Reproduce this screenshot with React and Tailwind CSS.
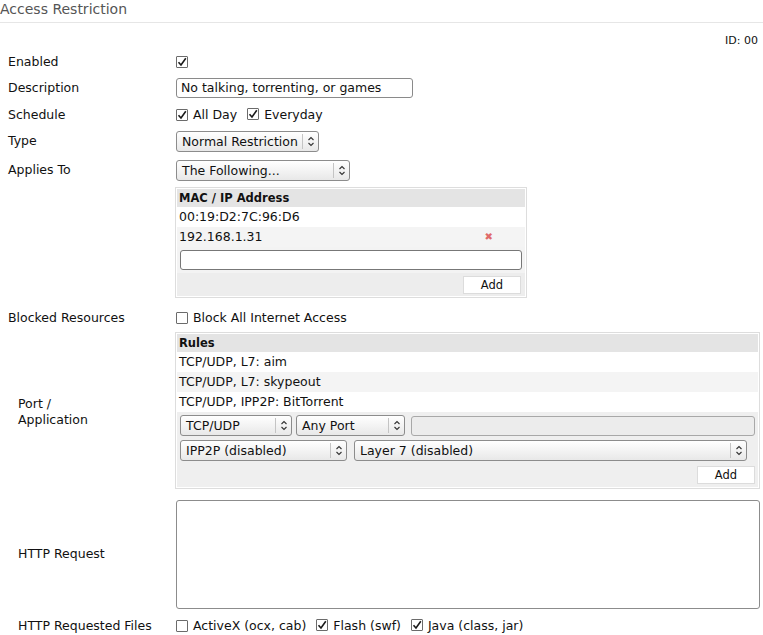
import React from "react";

const Check = ({ checked }) => (
  <span className="inline-flex shrink-0 w-[12px] h-[12px] border border-[#6b6b6b] rounded-[1px] bg-white items-center justify-center">
    {checked && (
      <svg width="10" height="10" viewBox="0 0 10 10">
        <path d="M1.5 5.2 L4 8 L8.8 1.2" fill="none" stroke="#1a1a1a" strokeWidth="1.6" />
      </svg>
    )}
  </span>
);

const Arrows = () => (
  <svg width="8" height="11" viewBox="0 0 8 11">
    <path d="M1.5 4 L4 1.5 L6.5 4 M1.5 7 L4 9.5 L6.5 7" fill="none" stroke="#333" strokeWidth="1.1" />
  </svg>
);

const Select = ({ label, className }) => (
  <div className={"flex h-[21px] border border-[#8c8c8c] rounded-[3px] bg-gradient-to-b from-white to-[#e8e8e8] " + className}>
    <span className="flex-1 pl-[5px] leading-[19px] text-[12.5px] text-[#111] truncate">{label}</span>
    <span className="w-[16px] my-[2px] border-l border-[#c4c4c4] flex items-center justify-center">
      <Arrows />
    </span>
  </div>
);

const AddButton = () => (
  <div className="w-[58px] h-[18px] bg-white border border-[#dcdcdc] text-[11.5px] leading-[16px] text-center text-[#111]">
    Add
  </div>
);

const Row = ({ label, children, className }) => (
  <div className={"flex items-center h-[22px] " + className}>
    <div className="w-[168px] shrink-0">{label}</div>
    <div className="flex items-center">{children}</div>
  </div>
);

export default function App() {
  return (
    <div className="w-[763px] h-[635px] bg-white overflow-hidden font-['DejaVu_Sans',sans-serif] text-[12.5px] text-[#111]">
      <div className="h-[23px] border-b border-[#e6e6e6] text-[14px] leading-[18px] text-[#555]">Access Restriction</div>

      <div className="pl-[8px] pr-[3px]">
        <div className="h-[28px] pt-[11px] text-right pr-[2px] text-[11px] leading-[14px]">ID:&nbsp;00</div>

        <Row label="Enabled">
          <Check checked />
        </Row>

        <Row label="Description" className="mt-[4px]">
          <div className="w-[237px] h-[20px] border border-[#8a8a8a] rounded-[3px] pl-[4px] text-[12.5px] leading-[18px]">
            No talking, torrenting, or games
          </div>
        </Row>

        <Row label="Schedule" className="mt-[5px]">
          <Check checked />
          <span className="ml-[5px]">All Day</span>
          <span className="ml-[10px]"><Check checked /></span>
          <span className="ml-[5px]">Everyday</span>
        </Row>

        <Row label="Type" className="mt-[4px]">
          <Select label="Normal Restriction" className="w-[143px]" />
        </Row>

        <Row label="Applies To" className="mt-[7px]">
          <Select label="The Following..." className="w-[174px]" />
        </Row>

        <div className="ml-[167px] mt-[6px] w-[352px] border border-[#dddddd] p-[1px] text-[12.5px]">
          <div className="h-[18px] bg-[#e4e4e4] pl-[2px] font-bold text-[11.5px] leading-[18px]">MAC / IP Address</div>
          <div className="h-[20px] pl-[2px] leading-[20px]">00:19:D2:7C:96:D6</div>
          <div className="h-[20px] pl-[2px] pr-[32px] bg-[#f4f4f4] flex items-center justify-between">
            <span>192.168.1.31</span>
            <span className="text-[#e06a6a] text-[10px] leading-[10px]">✖</span>
          </div>
          <div className="h-[26px] bg-[#f3f3f3] px-[3px] flex items-center">
            <div className="w-full h-[20px] border border-[#777] rounded-[3px] bg-white" />
          </div>
          <div className="h-[23px] bg-[#ededed] flex items-center justify-end pr-[4px]">
            <AddButton />
          </div>
        </div>

        <Row label="Blocked Resources" className="mt-[9px]">
          <Check />
          <span className="ml-[5px]">Block All Internet Access</span>
        </Row>

        <div className="flex mt-[3px]">
          <div className="w-[167px] shrink-0 pl-[10px] pt-[3px] flex items-center leading-[16px]">
            Port /<br />Application
          </div>
          <div className="w-[586px] border border-[#dddddd] p-[1px] text-[12.5px]">
            <div className="h-[18px] bg-[#e4e4e4] pl-[2px] font-bold text-[11.5px] leading-[18px]">Rules</div>
            <div className="h-[20px] pl-[2px] leading-[20px]">TCP/UDP, L7: aim</div>
            <div className="h-[20px] pl-[2px] leading-[20px] bg-[#f4f4f4]">TCP/UDP, L7: skypeout</div>
            <div className="h-[20px] pl-[2px] leading-[20px]">TCP/UDP, IPP2P: BitTorrent</div>
            <div className="bg-[#efefef] px-[3px] pt-[3px] pb-[1px] flex flex-col gap-[4px]">
              <div className="flex items-center">
                <Select label="TCP/UDP" className="w-[112px]" />
                <Select label="Any Port" className="w-[109px] ml-[4px]" />
                <div className="flex-1 ml-[6px] h-[20px] border border-[#a8a8a8] rounded-[3px] bg-[#ececec]" />
              </div>
              <div className="flex items-center">
                <Select label="IPP2P (disabled)" className="w-[167px]" />
                <Select label="Layer 7 (disabled)" className="w-[393px] ml-[7px]" />
              </div>
            </div>
            <div className="h-[25px] bg-[#efefef] flex items-center justify-end pr-[3px]">
              <AddButton />
            </div>
          </div>
        </div>

        <div className="flex mt-[11px]">
          <div className="w-[168px] shrink-0 pl-[10px] flex items-center">HTTP Request</div>
          <div className="w-[584px] h-[109px] border border-[#8c8c8c] rounded-[3px]" />
        </div>

        <div className="flex items-center h-[22px] mt-[6px]">
          <div className="w-[168px] shrink-0 pl-[10px]">HTTP Requested Files</div>
          <Check />
          <span className="ml-[5px]">ActiveX (ocx, cab)</span>
          <span className="ml-[10px]"><Check checked /></span>
          <span className="ml-[5px]">Flash (swf)</span>
          <span className="ml-[10px]"><Check checked /></span>
          <span className="ml-[5px]">Java (class, jar)</span>
        </div>
      </div>
    </div>
  );
}
